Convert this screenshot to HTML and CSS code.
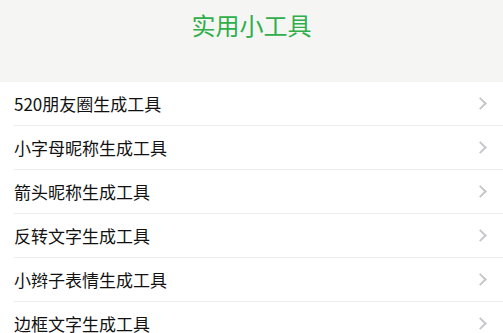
FILE: index.html
```html
<!DOCTYPE html>
<html lang="zh-CN">

<head>
    <meta charset="UTF-8">
    <meta name="viewport" content="width=device-width, initial-scale=1.0">
    <title>实用小工具</title>
    <link rel="stylesheet" href="styles.css">
</head>

<body>
    <div class="header">
        <h1 class="title">实用小工具</h1>
    </div>

    <ul class="list">
        <li class="item"><span class="name">520朋友圈生成工具</span><i class="arrow"></i></li>
        <li class="item"><span class="name">小字母昵称生成工具</span><i class="arrow"></i></li>
        <li class="item"><span class="name">箭头昵称生成工具</span><i class="arrow"></i></li>
        <li class="item"><span class="name">反转文字生成工具</span><i class="arrow"></i></li>
        <li class="item"><span class="name">小辫子表情生成工具</span><i class="arrow"></i></li>
        <li class="item"><span class="name">边框文字生成工具</span><i class="arrow"></i></li>
    </ul>
</body>

</html>
```

FILE: styles.css
```css
body {
    margin: 0;
    font-family: "Noto Sans CJK SC", "Noto Sans", sans-serif;
    background-color: #fff;
}

.header {
    height: 82px;
    background-color: #f5f6f3;
    box-sizing: border-box;
    padding-top: 9px;
}

.title {
    margin: 0;
    font-size: 24px;
    font-weight: normal;
    line-height: 32px;
    text-align: center;
    color: #2fae4a;
}

.list {
    margin: 0;
    padding: 0 0 0 14px;
    list-style: none;
}

.item {
    height: 44px;
    display: flex;
    align-items: center;
    justify-content: space-between;
    border-bottom: 1px solid #ededed;
    box-sizing: border-box;
    padding-right: 18px;
}

.name {
    font-size: 17px;
    color: #111;
}

.arrow {
    width: 7px;
    height: 7px;
    border-top: 2px solid #c7c7cc;
    border-right: 2px solid #c7c7cc;
    transform: rotate(45deg);
}
```
